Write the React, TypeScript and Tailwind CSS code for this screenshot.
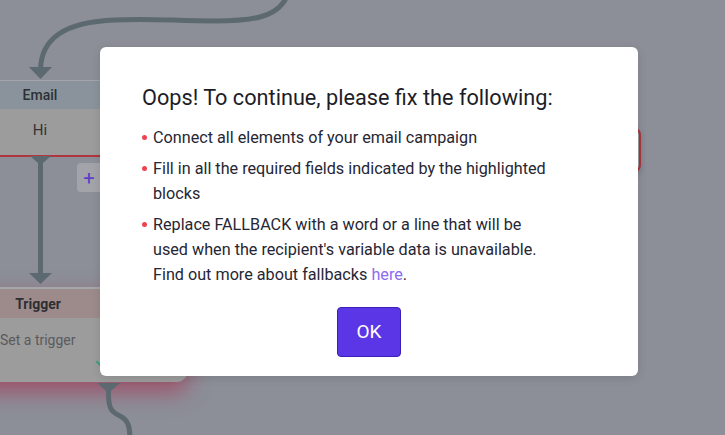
import React from "react";

function Connectors() {
  const c = "#5d6970";
  return (
    <svg
      className="absolute left-0 top-0"
      width={725}
      height={435}
      viewBox="0 0 725 435"
      fill="none"
    >
      <path
        d="M287 -4 C 278 18, 250 21, 215 21 C 175 21, 150 18, 115 20 C 65 22, 41 38, 40.5 70"
        stroke={c}
        strokeWidth={5}
        strokeLinecap="round"
      />
      <polygon points="29,67 52,67 40.5,79" fill={c} />
      <polygon points="30,156 51,156 43,163 38,163" fill={c} />
      <rect x={38} y={160} width={5} height={116} fill={c} />
      <polygon points="29,273 52,273 40.5,284" fill={c} />
      <polygon points="97,383 120,383 108.5,393" fill={c} />
      <path
        d="M108.5 390 C 108 410, 112 412, 120 416 C 128 420, 130 426, 130 440"
        stroke={c}
        strokeWidth={5}
      />
    </svg>
  );
}

export default function App() {
  return (
    <div
      className="relative h-[435px] w-[725px] overflow-hidden bg-[#8c8f98]"
      style={{ fontFamily: "Roboto, 'Noto Sans', Arial, sans-serif" }}
    >
      {/* right node edge */}
      <div className="absolute left-[480px] top-[127px] h-[46px] w-[161px] rounded-[8px] border-2 border-[#a8353c] bg-[#9a9a9e] shadow-[0_2px_6px_rgba(0,0,0,0.15)]" />

      {/* Email node */}
      <div className="absolute left-[-60px] top-[80px] w-[200px] border-t border-[#a3a5aa]">
        <div className="flex h-[28px] items-center justify-center bg-[#8a939b] pt-[1px] text-[14px] font-medium text-[#2c3034]">
          Email
        </div>
        <div className="flex h-[46px] items-start justify-center bg-[#9c9c9d] pt-[10px] text-[15px] text-[#333]">
          Hi
        </div>
        <div className="h-[2px] bg-[#b0363d]" />
      </div>

      {/* plus button */}
      <div className="absolute left-[77px] top-[163px] flex h-[29px] w-[30px] items-center justify-center rounded-[4px] bg-[#a3a4a9] pr-[6px] text-[20px] leading-none text-[#5a40c4]">
        +
      </div>

      {/* Trigger node */}
      <div className="absolute left-[-112px] top-[287px] w-[300px] rounded-br-[12px] border-t-2 border-[#a4a6aa] shadow-[0_10px_22px_rgba(170,40,75,0.6)]">
        <div className="flex h-[29px] items-center justify-center bg-[#9d8b8c] pt-[2px] text-[14px] font-bold text-[#2f2f33]">
          Trigger
        </div>
        <div className="relative h-[64px] rounded-br-[12px] bg-[#9c9c9c] pl-[112px] pt-[12px] text-[14px] text-[#5a5a5c]">
          Set a trigger
          <span className="absolute left-[209px] top-[41px] h-[6px] w-[6px] rotate-45 border-b-2 border-r-2 border-[#3aa27a]" />
        </div>
      </div>

      <Connectors />

      {/* Modal */}
      <div className="absolute left-[100px] top-[47px] w-[538px] rounded-[6px] bg-white px-[42px] pb-[19px] pt-[37px] shadow-[0_2px_10px_rgba(0,0,0,0.12)]">
        <h2 className="text-[21.7px] leading-[28px] text-[#1d1d28]">
          Oops! To continue, please fix the following:
        </h2>
        <ul className="mt-[13px] flex w-[411px] flex-col gap-[6px] text-[16.2px] leading-[25px] text-[#262634]">
          <li className="flex">
            <span className="mr-[6px] mt-[10px] h-[5px] w-[5px] shrink-0 rounded-full bg-[#ee4450]" />
            <span>Connect all elements of your email campaign</span>
          </li>
          <li className="flex">
            <span className="mr-[6px] mt-[10px] h-[5px] w-[5px] shrink-0 rounded-full bg-[#ee4450]" />
            <span>Fill in all the required fields indicated by the highlighted blocks</span>
          </li>
          <li className="flex">
            <span className="mr-[6px] mt-[10px] h-[5px] w-[5px] shrink-0 rounded-full bg-[#ee4450]" />
            <span>
              Replace FALLBACK with a word or a line that will be used when the
              recipient's variable data is unavailable. Find out more about
              fallbacks <a className="text-[#8b6cf2]">here</a>.
            </span>
          </li>
        </ul>
        <div className="mt-[20px] flex justify-center">
          <button className="flex h-[50px] w-[64px] items-center justify-center rounded-[4px] border border-[#3b20b8] bg-[#5b36e6] text-[19px] text-white">
            OK
          </button>
        </div>
      </div>
    </div>
  );
}
